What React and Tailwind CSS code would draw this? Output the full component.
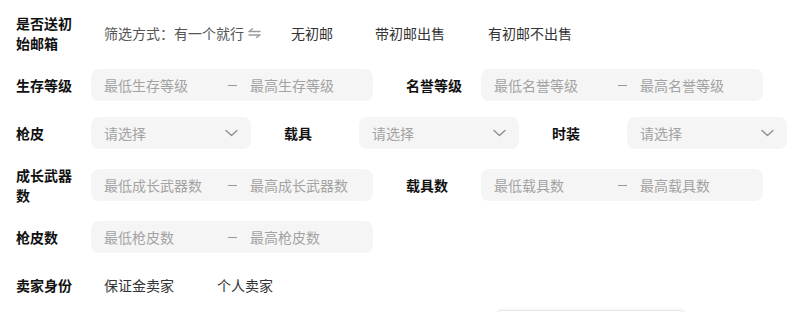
import React from 'react';

const font = { fontFamily: '"Noto Sans CJK SC", "Noto Sans", sans-serif' };

function Label({ children }) {
  return (
    <div className="w-[60px] mr-[15px] shrink-0 text-[14px] leading-[20px] font-bold text-[#111]">
      {children}
    </div>
  );
}

function RangeInput({ min, max }) {
  return (
    <div className="w-[282px] h-8 rounded-lg bg-[#f5f5f5] px-[13px] flex items-center text-[14px] text-[#a3a3a3]">
      <span className="w-[110px] truncate">{min}</span>
      <span className="w-[36px] flex justify-center">
        <span className="block w-[9px] h-px bg-[#999]" />
      </span>
      <span className="w-[110px] truncate">{max}</span>
    </div>
  );
}

function Select() {
  return (
    <div className="w-[160px] h-8 rounded-lg bg-[#f5f5f5] pl-[13px] pr-[13px] flex items-center justify-between text-[14px] text-[#a3a3a3]">
      <span>请选择</span>
      <svg width="13" height="8" viewBox="0 0 13 8" fill="none">
        <path d="M1 1.5 L6.5 6.5 L12 1.5" stroke="#8c8c8c" strokeWidth="1.3" strokeLinecap="round" strokeLinejoin="round" />
      </svg>
    </div>
  );
}

function SwapIcon() {
  return (
    <svg width="13" height="10" viewBox="0 0 13 10" fill="none" className="ml-[4px]">
      <path d="M1 3.5 H12 M1 3.5 L4.5 0.8" stroke="#9a9a9a" strokeWidth="1.3" strokeLinecap="round" />
      <path d="M1 7 H12 M12 7 L8.5 9.5" stroke="#9a9a9a" strokeWidth="1.3" strokeLinecap="round" />
    </svg>
  );
}

export default function App() {
  return (
    <div className="w-[792px] h-[312px] bg-white overflow-hidden relative" style={font}>
      <div className="pt-[13px] pl-4 flex flex-col gap-4">
        <div className="flex items-center h-10">
          <Label>是否送初始邮箱</Label>
          <div className="flex items-center text-[14px] pl-[13px]">
            <span className="text-[#555] flex items-center">
              筛选方式：有一个就行
              <SwapIcon />
            </span>
            <span className="ml-[30px] text-[#333]">无初邮</span>
            <span className="ml-[42px] text-[#333]">带初邮出售</span>
            <span className="ml-[43px] text-[#333]">有初邮不出售</span>
          </div>
        </div>

        <div className="flex items-center gap-[33px]">
          <div className="flex items-center">
            <Label>生存等级</Label>
            <RangeInput min="最低生存等级" max="最高生存等级" />
          </div>
          <div className="flex items-center">
            <Label>名誉等级</Label>
            <RangeInput min="最低名誉等级" max="最高名誉等级" />
          </div>
        </div>

        <div className="flex items-center gap-[33px]">
          <div className="flex items-center">
            <Label>枪皮</Label>
            <Select />
          </div>
          <div className="flex items-center">
            <Label>载具</Label>
            <Select />
          </div>
          <div className="flex items-center">
            <Label>时装</Label>
            <Select />
          </div>
        </div>

        <div className="flex items-center gap-[33px] h-10">
          <div className="flex items-center">
            <Label>成长武器数</Label>
            <RangeInput min="最低成长武器数" max="最高成长武器数" />
          </div>
          <div className="flex items-center">
            <Label>载具数</Label>
            <RangeInput min="最低载具数" max="最高载具数" />
          </div>
        </div>

        <div className="flex items-center">
          <Label>枪皮数</Label>
          <RangeInput min="最低枪皮数" max="最高枪皮数" />
        </div>

        <div className="flex items-center h-8">
          <Label>卖家身份</Label>
          <div className="flex items-center text-[14px] text-[#333] pl-[13px] gap-[43px]">
            <span>保证金卖家</span>
            <span>个人卖家</span>
          </div>
        </div>
      </div>
      <div className="absolute left-[496px] top-[310px] w-[190px] h-4 rounded-md border-t border-[#e6e6e6] shadow-[0_-1px_3px_rgba(0,0,0,0.06)]" />
    </div>
  );
}
